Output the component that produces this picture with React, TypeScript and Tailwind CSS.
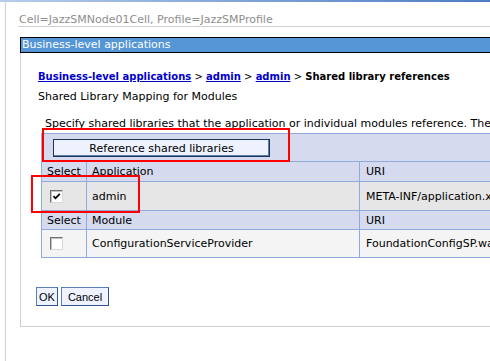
import React from "react";

const font = { fontFamily: '"DejaVu Sans", Verdana, sans-serif' };

function Checkbox({ checked }: { checked?: boolean }) {
  return (
    <div className="w-[13px] h-[13px] border border-t-[#707070] border-l-[#707070] border-b-[#d8d8d8] border-r-[#d8d8d8] bg-white shadow-[inset_1px_1px_0_#c0c0c0] flex items-center justify-center">
      {checked && (
        <svg width="9" height="9" viewBox="0 0 9 9">
          <path d="M1.5 4.2 L3.5 6.3 L7.8 1.8" stroke="#000" strokeWidth="1.8" fill="none" />
        </svg>
      )}
    </div>
  );
}

export default function App() {
  return (
    <div className="relative w-[490px] h-[361px] overflow-hidden bg-white text-black text-[11px]" style={font}>
      <div className="h-[2px] bg-gradient-to-r from-[#b8cdea] via-[#7fa3d8] to-[#4e7cc4]" />
      <div className="ml-[5px] h-[359px] border-l border-[#d4d4d4]">
        <div className="pt-[12px] pl-[12px]">
          <div className="leading-[12px] text-[#8e8e8e] border-b border-[#cfcfcf] pl-[1px] whitespace-nowrap">
            Cell=JazzSMNode01Cell, Profile=JazzSMProfile
          </div>
        </div>
        <div className="pl-[14px] mt-[10px]">
          <div className="h-[16px] border-t border-b border-l border-black bg-[#5596d6] text-white leading-[14px] pl-[1px] whitespace-nowrap">
            Business-level applications
          </div>
          <div className="h-[274px] border-l border-b border-[#cfcfcf] pl-[17px] pt-[17px]">
            <div className="leading-[13px] whitespace-nowrap text-[10px]">
              <a className="font-bold underline text-[#0000cc]">Business-level applications</a>
              <span> &gt; </span>
              <a className="font-bold underline text-[#0000cc]">admin</a>
              <span> &gt; </span>
              <a className="font-bold underline text-[#0000cc]">admin</a>
              <span> &gt; </span>
              <span className="font-bold">Shared library references</span>
            </div>
            <div className="leading-[13px] mt-[7px] whitespace-nowrap">Shared Library Mapping for Modules</div>
            <div className="leading-[13px] mt-[14px] pl-[7px] whitespace-nowrap">
              Specify shared libraries that the application or individual modules reference. The
            </div>
            <div className="mt-[3px] ml-[3px] w-[560px] border border-[#8faadb] bg-[#d5daee]">
              <div className="h-[28px] border-b border-[#8faadb] flex items-center pl-[11px]">
                <div className="w-[217px] h-[18px] border border-[#1d3557] bg-[#edf2fe] shadow-[inset_-1px_-1px_0_#5a7fb5] flex items-center justify-center leading-[13px] pt-[1px]">
                  Reference shared libraries
                </div>
              </div>
              <div className="h-[20px] border-b border-[#8faadb] flex leading-[13px]">
                <div className="w-[45px] border-r border-[#8faadb] pl-[5px] flex items-center">Select</div>
                <div className="w-[273px] border-r border-[#8faadb] pl-[5px] flex items-center">Application</div>
                <div className="flex-1 pl-[6px] flex items-center">URI</div>
              </div>
              <div className="h-[29px] border-b border-[#8faadb] flex leading-[13px] bg-[#e6e6e6]">
                <div className="w-[45px] border-r border-[#8faadb] pl-[8px] flex items-center">
                  <Checkbox checked />
                </div>
                <div className="w-[273px] border-r border-[#8faadb] pl-[5px] flex items-center">admin</div>
                <div className="flex-1 pl-[6px] flex items-center whitespace-nowrap">META-INF/application.xml</div>
              </div>
              <div className="h-[19px] border-b border-[#8faadb] flex leading-[13px]">
                <div className="w-[45px] border-r border-[#8faadb] pl-[5px] flex items-center">Select</div>
                <div className="w-[273px] border-r border-[#8faadb] pl-[5px] flex items-center">Module</div>
                <div className="flex-1 pl-[6px] flex items-center">URI</div>
              </div>
              <div className="h-[27px] flex leading-[13px] bg-[#f4f4f4]">
                <div className="w-[45px] border-r border-[#8faadb] pl-[8px] flex items-center">
                  <Checkbox />
                </div>
                <div className="w-[273px] border-r border-[#8faadb] pl-[5px] flex items-center whitespace-nowrap">ConfigurationServiceProvider</div>
                <div className="flex-1 pl-[6px] flex items-center whitespace-nowrap">FoundationConfigSP.war</div>
              </div>
            </div>
            <div className="mt-[29px] -ml-[2px] flex gap-[3px] text-[11px]" style={{ fontFamily: '"Liberation Sans", Arial, sans-serif' }}>
              <div className="h-[19px] px-[2px] border border-[#5b80b8] border-r-[#2f558c] border-b-[#2f558c] bg-[#eef3ff] flex items-center leading-[14px]">OK</div>
              <div className="h-[19px] px-[6px] border border-[#5b80b8] border-r-[#2f558c] border-b-[#2f558c] bg-[#eef3ff] flex items-center leading-[14px]">Cancel</div>
            </div>
          </div>
        </div>
      </div>
      <div className="absolute left-[42px] top-[128px] w-[248px] h-[34px] border-2 border-[#ff0000]" />
      <div className="absolute left-[31px] top-[175px] w-[109px] h-[38px] border-2 border-[#ff0000]" />
    </div>
  );
}
